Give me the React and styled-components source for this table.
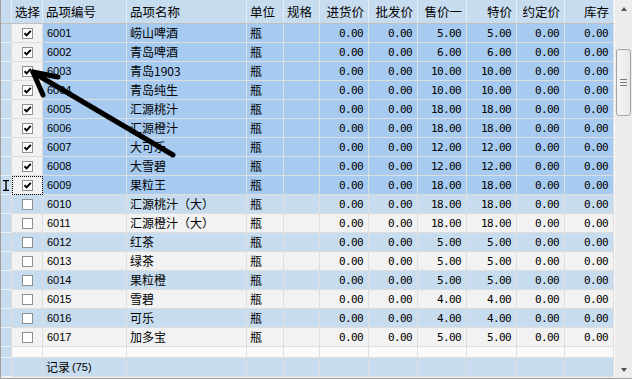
import React from 'react';
import styled, { createGlobalStyle, css } from 'styled-components';

const SKY = '#a6caf0';
const PALE = '#c8dcf0';
const GREY = '#f2f2f2';
const LINE = '#dedede';

const goods = [
    ['6001', '崂山啤酒', '5.00'],
    ['6002', '青岛啤酒', '6.00'],
    ['6003', '青岛1903', '10.00'],
    ['6004', '青岛纯生', '10.00'],
    ['6005', '汇源桃汁', '18.00'],
    ['6006', '汇源橙汁', '18.00'],
    ['6007', '大可乐', '12.00'],
    ['6008', '大雪碧', '12.00'],
    ['6009', '果粒王', '18.00'],
    ['6010', '汇源桃汁（大）', '18.00'],
    ['6011', '汇源橙汁（大）', '18.00'],
    ['6012', '红茶', '5.00'],
    ['6013', '绿茶', '5.00'],
    ['6014', '果粒橙', '5.00'],
    ['6015', '雪碧', '4.00'],
    ['6016', '可乐', '4.00'],
    ['6017', '加多宝', '5.00'],
];

const CHECKED = 9;
const CURRENT = 8;

const headers = [
    { label: '', right: false },
    { label: '选择', right: false },
    { label: '品项编号', right: false },
    { label: '品项名称', right: false },
    { label: '单位', right: false },
    { label: '规格', right: false },
    { label: '进货价', right: true },
    { label: '批发价', right: true },
    { label: '售价一', right: true },
    { label: '特价', right: true },
    { label: '约定价', right: true },
    { label: '库存', right: true },
];

const App = () => {
    return (
        <>
            <GlobalStyle />
            <Frame>
                <GridArea>
                    <Row $h={24} $bg={PALE} $header>
                        {headers.map((h, i) => (
                            <HeadCell key={i} $right={h.right}>{h.label}</HeadCell>
                        ))}
                    </Row>

                    {goods.map(([code, name, price], idx) => {
                        const checked = idx < CHECKED;
                        const rowBg = checked ? SKY : (idx % 2 === 1 ? PALE : GREY);
                        const boxBg = checked ? GREY : rowBg;
                        return (
                            <Row key={code} $h={19} $bg={rowBg}>
                                <Indicator>{idx === CURRENT && <EditMark />}</Indicator>
                                <CheckCell $bg={boxBg} $focus={idx === CURRENT}>
                                    <Box>{checked && <Tick />}</Box>
                                </CheckCell>
                                <Cell $code>{code}</Cell>
                                <Cell>{name}</Cell>
                                <Cell>瓶</Cell>
                                <Cell />
                                <Cell $num>0.00</Cell>
                                <Cell $num>0.00</Cell>
                                <Cell $num>{price}</Cell>
                                <Cell $num>{price}</Cell>
                                <Cell $num>0.00</Cell>
                                <Cell $num>0.00</Cell>
                            </Row>
                        );
                    })}

                    <Row $h={11} $bg="#fafafa">
                        <Indicator />
                        {headers.slice(1).map((_, i) => <Cell key={i} />)}
                    </Row>

                    <Row $h={19} $bg={PALE}>
                        <Indicator />
                        <Cell />
                        <Cell>记录<Small>(75)</Small></Cell>
                        {headers.slice(3).map((_, i) => <Cell key={i} />)}
                    </Row>

                    <Arrow viewBox="0 0 614 379" width="614" height="379">
                        <g stroke="#000" strokeWidth="5" strokeLinecap="round" fill="none">
                            <line x1="172" y1="155" x2="33" y2="73" />
                            <line x1="32" y1="72" x2="57" y2="77" />
                            <line x1="32" y1="72" x2="42" y2="95" />
                        </g>
                    </Arrow>
                </GridArea>

                <ScrollBar>
                    <ScrollBtn><Triangle $up /></ScrollBtn>
                    <Track>
                        <Thumb>
                            <Grip /><Grip /><Grip />
                        </Thumb>
                    </Track>
                    <ScrollBtn><Triangle /></ScrollBtn>
                </ScrollBar>
            </Frame>
        </>
    );
};

const EditMark = () => (
    <svg width="8" height="11" viewBox="0 0 8 11">
        <path d="M1 0.5h6M1 10.5h6M4 0.5v10" stroke="#000" strokeWidth="1.4" fill="none" />
    </svg>
);

const Tick = () => (
    <svg width="9" height="9" viewBox="0 0 9 9">
        <path d="M1.5 4.2 L3.6 6.4 L7.8 1.8" stroke="#000" strokeWidth="2" fill="none" />
    </svg>
);

// Style components
const GlobalStyle = createGlobalStyle`
    html, body {
        margin: 0;
        padding: 0;
        background: #f0f0f0;
        overflow: hidden;
    }
    body {
        font-family: "Noto Sans CJK SC", "Liberation Sans", sans-serif;
        font-size: 12px;
        color: #000;
    }
`;

const Frame = styled.div`
    display: flex;
    width: 632px;
    height: 379px;
    background: #f0f0f0;
    box-sizing: border-box;
    border-bottom: 1px solid #a0a0a0;
`;

const GridArea = styled.div`
    position: relative;
    width: 614px;
    display: flex;
    flex-direction: column;
    border-left: 1px solid #a0a0a0;
    box-sizing: border-box;
`;

const Row = styled.div`
    display: grid;
    grid-template-columns: 11px 31px 84px 120px 37px 36px 49px 49px 49px 50px 48px 49px;
    height: ${p => p.$h}px;
    background: ${p => p.$bg};
    flex-shrink: 0;
    ${p => p.$header && css`
        border-bottom: 1px solid #c0c0c0;
        height: ${p.$h - 1}px;
    `}
`;

const Cell = styled.div`
    box-sizing: border-box;
    border-right: 1px solid ${LINE};
    border-bottom: 1px solid ${LINE};
    display: flex;
    align-items: center;
    justify-content: ${p => (p.$num ? 'flex-end' : 'flex-start')};
    padding: ${p => (p.$num ? '0 5px 0 0' : p.$code ? '0 0 0 4px' : '0 0 0 3px')};
    white-space: nowrap;
    overflow: hidden;
    line-height: 1;
    ${p => p.$num && css`
        font-family: "DejaVu Sans Mono", "Liberation Mono", monospace;
        font-size: 11px;
        letter-spacing: -0.6px;
    `}
    ${p => p.$code && css`
        font-family: "Liberation Sans", sans-serif;
        font-size: 11px;
    `}
`;

const HeadCell = styled.div`
    box-sizing: border-box;
    border-right: 1px solid #e8eef6;
    display: flex;
    align-items: center;
    justify-content: ${p => (p.$right ? 'flex-end' : 'flex-start')};
    padding: ${p => (p.$right ? '0 4px 0 0' : '0 0 0 3px')};
    white-space: nowrap;
    font-size: 12.5px;
`;

const Indicator = styled.div`
    box-sizing: border-box;
    background: ${PALE};
    border-right: 1px solid ${LINE};
    border-bottom: 1px solid #eef3f9;
    display: flex;
    align-items: center;
    justify-content: center;
`;

const CheckCell = styled.div`
    box-sizing: border-box;
    background: ${p => p.$bg};
    border-right: 1px solid ${LINE};
    border-bottom: 1px solid ${LINE};
    display: flex;
    align-items: center;
    justify-content: center;
    ${p => p.$focus && css`
        outline: 1px dotted #000;
        outline-offset: -1px;
    `}
`;

const Box = styled.div`
    width: 11px;
    height: 11px;
    box-sizing: border-box;
    border: 1px solid #8e8f8f;
    background: #fff;
    display: flex;
    align-items: center;
    justify-content: center;
`;

const Small = styled.span`
    font-family: "Liberation Sans", sans-serif;
    font-size: 11px;
    margin-left: 2px;
`;

const Arrow = styled.svg`
    position: absolute;
    left: 0;
    top: 0;
    pointer-events: none;
`;

const ScrollBar = styled.div`
    width: 18px;
    display: flex;
    flex-direction: column;
    background: #ececec;
    border-left: 1px solid #f8f8f8;
    box-sizing: border-box;
`;

const ScrollBtn = styled.div`
    height: 17px;
    display: flex;
    align-items: center;
    justify-content: center;
`;

const Triangle = styled.div`
    width: 0;
    height: 0;
    border-left: 3.5px solid transparent;
    border-right: 3.5px solid transparent;
    ${p => (p.$up
        ? css`border-bottom: 4px solid #505050;`
        : css`border-top: 4px solid #505050;`)}
`;

const Track = styled.div`
    flex: 1;
    padding-top: 32px;
`;

const Thumb = styled.div`
    width: 15px;
    height: 67px;
    margin-left: 1px;
    box-sizing: border-box;
    border: 1px solid #a3a3a3;
    border-radius: 3px;
    background: linear-gradient(to right, #f5f5f5, #e8e8e8);
    display: flex;
    flex-direction: column;
    align-items: center;
    justify-content: center;
    gap: 2px;
`;

const Grip = styled.div`
    width: 7px;
    height: 1px;
    background: #7a7a7a;
`;

export default App;
